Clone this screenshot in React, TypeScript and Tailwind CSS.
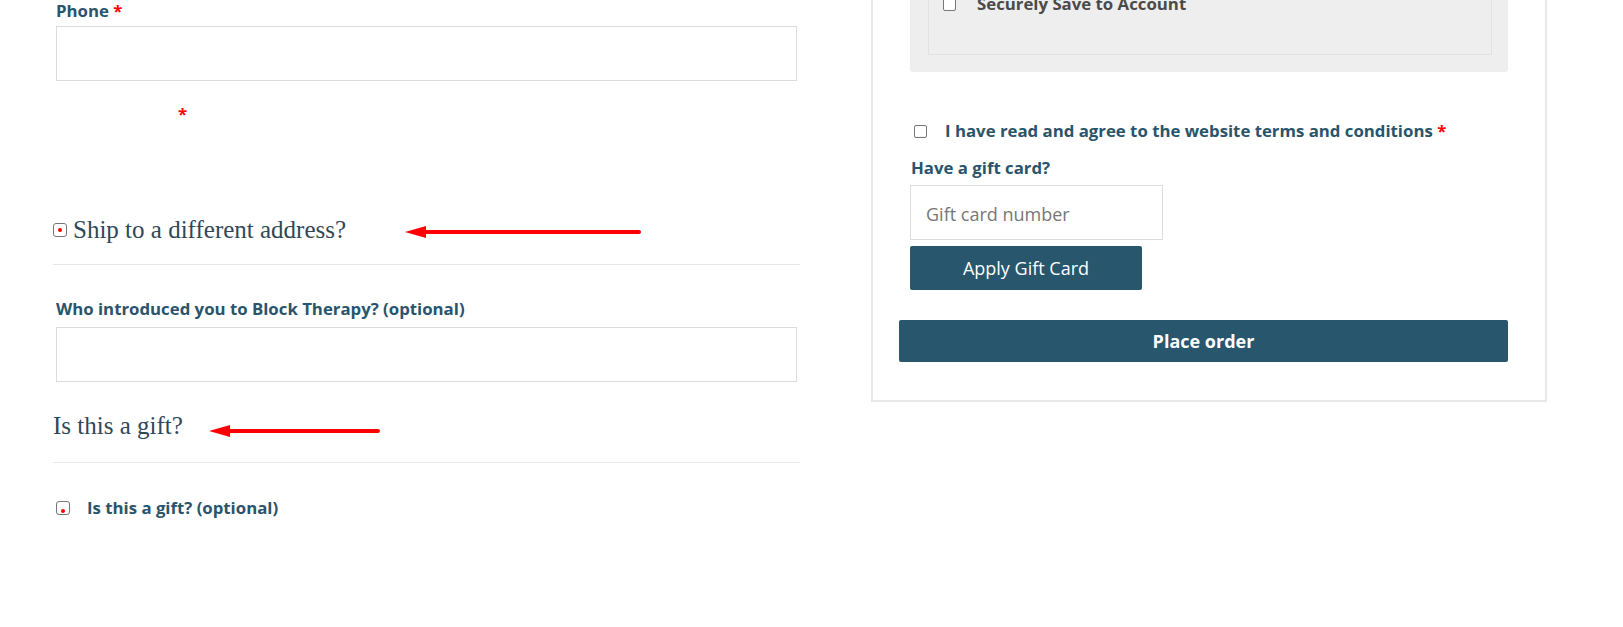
import React from "react";

const label = "text-[16.8px] leading-[20px] font-bold text-[#29546b]";
const serif = "font-['Liberation_Serif',serif] text-[25px] leading-[32px] text-[#2f4858]";

function Arrow({ width }: { width: number }) {
  return (
    <svg width={width} height="14" viewBox={`0 0 ${width} 14`} className="shrink-0">
      <polygon points="0,7 21,1 21,13" fill="#ff0000" />
      <line x1="16" y1="7" x2={width - 2} y2="7" stroke="#ff0000" strokeWidth="4" strokeLinecap="round" />
    </svg>
  );
}

function DotBox({ dot }: { dot: "center" | "bottom" }) {
  return (
    <span className="relative inline-block h-[14px] w-[14px] shrink-0 rounded-[3px] border-[1.5px] border-[#777] bg-white">
      <span
        className={
          dot === "center"
            ? "absolute left-1/2 top-1/2 h-[4px] w-[4px] -translate-x-1/2 -translate-y-1/2 rounded-full bg-[#ff0000]"
            : "absolute left-1/2 bottom-[1px] h-[4px] w-[4px] -translate-x-1/2 rounded-full bg-[#ff0000]"
        }
      />
    </span>
  );
}

function Box() {
  return <span className="inline-block h-[13px] w-[13px] shrink-0 rounded-[2px] border border-[#767676] bg-white" />;
}

export default function App() {
  return (
    <div className="h-[627px] w-[1623px] overflow-hidden bg-white font-['Open_Sans',sans-serif]">
      <div className="flex items-start">
        {/* left: shipping form */}
        <div className="ml-[53px] w-[747px]">
          <div className={`${label} pl-[3px] pt-[1px]`}>
            Phone <span className="text-[#ff0000]">*</span>
          </div>
          <div className="ml-[3px] mt-[5px] h-[55px] w-[741px] border border-[#dcdcdc]" />
          <div className={`${label} mt-[23px] pl-[125px]`}>
            <span className="text-[#ff0000]">*</span>
          </div>

          <div className="mt-[90px] flex items-center">
            <DotBox dot="center" />
            <span className={`${serif} ml-[6px]`}>Ship to a different address?</span>
            <span className="ml-[59px] mt-[4px] flex">
              <Arrow width={236} />
            </span>
          </div>
          <div className="mt-[18px] border-t border-[#e6e6e6]" />

          <div className={`${label} mt-[34px] pl-[3px]`}>Who introduced you to Block Therapy? (optional)</div>
          <div className="ml-[3px] mt-[8px] h-[55px] w-[741px] border border-[#dcdcdc]" />

          <div className="mt-[28px] flex items-center">
            <span className={serif}>Is this a gift?</span>
            <span className="ml-[26px] mt-[10px] flex">
              <Arrow width={171} />
            </span>
          </div>
          <div className="mt-[20px] border-t border-[#e6e6e6]" />

          <div className="mt-[35px] flex items-center pl-[3px]">
            <DotBox dot="bottom" />
            <span className={`${label} ml-[17px]`}>Is this a gift? (optional)</span>
          </div>
        </div>

        {/* right: order review */}
        <div className="-mt-[40px] ml-[71px] w-[676px] border-2 border-[#e8e8e8] px-[37px] pb-[38px]">
          <div className="rounded-b-[3px] bg-[#eeeeee] pb-[17px] pl-[18px] pr-[16px] pt-[8px]">
            <div className="border border-[#e2e2e2] pb-[40px] pl-[14px] pt-[23px]">
              <div className="flex h-[20px] items-center">
                <Box />
                <span className="ml-[21px] text-[16.8px] font-bold leading-[20px] text-[#4a4a4a]">Securely Save to Account</span>
              </div>
            </div>
          </div>

          <div className="mt-[49px] flex h-[20px] items-center pl-[4px]">
            <Box />
            <span className={`${label} ml-[18px]`}>
              I have read and agree to the website terms and conditions <span className="text-[#ff0000]">*</span>
            </span>
          </div>

          <div className={`${label} mt-[17px] pl-[1px]`}>Have a gift card?</div>
          <div className="mt-[7px] flex h-[55px] w-[253px] items-center border border-[#dcdcdc] pl-[15px] pt-[3px] text-[18px] text-[#777]">
            Gift card number
          </div>
          <button className="mt-[6px] h-[44px] w-[232px] rounded-[2px] bg-[#27566d] text-[18px] text-white">
            Apply Gift Card
          </button>

          <button className="-ml-[11px] mt-[30px] block h-[42px] w-[609px] rounded-[2px] bg-[#27566d] text-[18px] font-bold text-white">
            Place order
          </button>
        </div>
      </div>
    </div>
  );
}
